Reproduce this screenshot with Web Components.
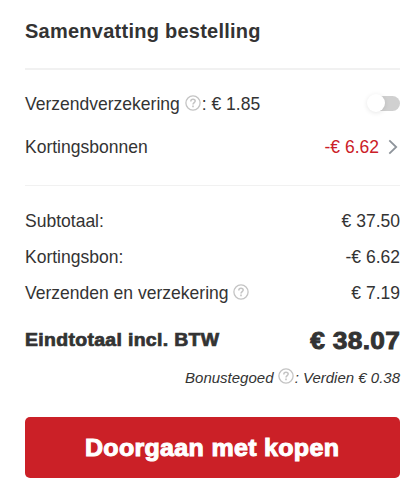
<!DOCTYPE html>
<html lang="nl">
<head>
<meta charset="utf-8">
<title>Samenvatting bestelling</title>
<style>
body {
    margin: 0;
    background: #fff;
    color: #333;
    font-family: "Liberation Sans", Arial, sans-serif;
    font-size: 17.52px;
}
</style>
</head>
<body>
<order-summary></order-summary>

<script>
// small round question mark behind a label
var template_help = document.createElement("template");
template_help.innerHTML = `
<style>
:host { display: inline-block; width: 16px; height: 16px; margin-right: 1px; vertical-align: -1px; }
svg { display: block; }
</style>
<svg width="16" height="16" viewBox="0 0 16 16" fill="none" stroke="#c4c4c4">
    <circle cx="8" cy="8" r="7.1" stroke-width="1.3"/>
    <path d="M5.8 6.4C5.8 4.9 6.7 4.2 8 4.2s2.2.8 2.2 1.9c0 1.5-2.2 1.7-2.2 3.4" stroke-width="1.5"/>
    <path d="M8 10.6v1.6" stroke-width="1.6"/>
</svg>
`;

class HelpIcon extends HTMLElement {
    constructor(){
        super();
        this.attachShadow({mode:"open"});
    }

    connectedCallback(){
        this.shadowRoot.appendChild(template_help.content.cloneNode(true));
    }
}

customElements.define("help-icon", HelpIcon)

// switch in its off position
var template_toggle = document.createElement("template");
template_toggle.innerHTML = `
<style>
:host {
    display: flex;
    align-items: center;
    width: 31px;
    height: 15px;
    margin-bottom: 2px;
    border-radius: 8px;
    background: #d0d0d0;
}
.knob {
    flex: none;
    width: 18px;
    height: 18px;
    margin-left: -2px;
    border-radius: 50%;
    background: #fff;
    box-shadow: 0 1px 5px rgba(0, 0, 0, .1);
}
</style>
<div class='knob'></div>
`;

class ToggleSwitch extends HTMLElement {
    constructor(){
        super();
        this.attachShadow({mode:"open"});
    }

    connectedCallback(){
        this.shadowRoot.appendChild(template_toggle.content.cloneNode(true));
        this.setAttribute("role", "switch");
        this.setAttribute("aria-checked", "false");
        this.addEventListener("click", () => {
            this.setAttribute("aria-checked", this.getAttribute("aria-checked") !== "true");
        });
    }
}

customElements.define("toggle-switch", ToggleSwitch)

// label on the left, value on the right
var template_row = document.createElement("template");
template_row.innerHTML = `
<style>
:host {
    display: flex;
    align-items: center;
    justify-content: space-between;
    height: 36px;
    white-space: nowrap;
}
.value { display: flex; align-items: center; }
</style>
<div><slot></slot></div>
<div class='value'><slot name='value'></slot></div>
`;

class SummaryRow extends HTMLElement {
    constructor(){
        super();
        this.attachShadow({mode:"open"});
    }

    connectedCallback(){
        this.shadowRoot.appendChild(template_row.content.cloneNode(true));
    }
}

customElements.define("summary-row", SummaryRow)

var template_button = document.createElement("template");
template_button.innerHTML = `
<style>
:host { display: block; }
button {
    display: block;
    width: 100%;
    height: 61px;
    padding: 1px 0 0;
    border: 0;
    border-radius: 5px;
    background: #cb2027;
    color: #fff;
    font: bold 23px "Liberation Sans", Arial, sans-serif;
    letter-spacing: .3px;
    -webkit-text-stroke: 1px #fff;
}
span { display: inline-block; transform: scaleX(1.086); }
</style>
<button type='button'><span><slot></slot></span></button>
`;

class CheckoutButton extends HTMLElement {
    constructor(){
        super();
        this.attachShadow({mode:"open"});
    }

    connectedCallback(){
        this.shadowRoot.appendChild(template_button.content.cloneNode(true));
    }
}

customElements.define("checkout-button", CheckoutButton)

var template_summary = document.createElement("template");
template_summary.innerHTML = `
<style>
:host { display: block; padding: 19px 16px 0 25px; }
h2 { margin: 0; font-size: 20px; line-height: 24px; letter-spacing: .25px; }
.options {
    margin-top: 25px;
    padding: 16px 0 13px;
    border-top: 2px solid #f1f1f1;
    border-bottom: 1px solid #f1f1f1;
}
.coupon { height: 50px; }
.discount { color: #cb2027; }
.chevron { margin: 0 2px 0 9px; }
.costs { padding-top: 17px; }
.total { height: 60px; margin-top: -1px; font-weight: bold; }
.total-label, .total-price { display: inline-block; }
.total-label { font-size: 18px; letter-spacing: .3px; transform: scaleX(1.08); transform-origin: left; -webkit-text-stroke: .7px #333; }
.total-price { font-size: 24px; letter-spacing: .3px; padding-top: 1px; transform: scaleX(1.095); transform-origin: right; -webkit-text-stroke: .9px #333; }
.bonus { margin-top: -2px; font-size: 15px; line-height: 18px; font-style: italic; text-align: right; }
checkout-button { margin-top: 30px; }
</style>
<h2>Samenvatting bestelling</h2>
<div class='options'>
    <summary-row>Verzendverzekering <help-icon></help-icon>: € 1.85
        <toggle-switch slot='value'></toggle-switch>
    </summary-row>
    <summary-row class='coupon'>Kortingsbonnen
        <span slot='value' class='discount'>-€ 6.62</span>
        <svg slot='value' class='chevron' width='10' height='16' viewBox='0 0 10 16' fill='none' stroke='#8e949b' stroke-width='1.8'><path d='M1.3 1.3 8.2 8l-6.9 6.7'/></svg>
    </summary-row>
</div>
<div class='costs'>
    <summary-row>Subtotaal:<span slot='value'>€ 37.50</span></summary-row>
    <summary-row>Kortingsbon:<span slot='value'>-€ 6.62</span></summary-row>
    <summary-row>Verzenden en verzekering <help-icon></help-icon><span slot='value'>€ 7.19</span></summary-row>
    <summary-row class='total'>
        <span class='total-label'>Eindtotaal incl. BTW</span>
        <span slot='value' class='total-price'>€ 38.07</span>
    </summary-row>
</div>
<div class='bonus'>Bonustegoed <help-icon></help-icon>: Verdien € 0.38</div>
<checkout-button>Doorgaan met kopen</checkout-button>
`;

class OrderSummary extends HTMLElement {
    constructor(){
        super();
        this.attachShadow({mode:"open"});
    }

    connectedCallback(){
        this.shadowRoot.appendChild(template_summary.content.cloneNode(true));
    }
}

customElements.define("order-summary", OrderSummary)
</script>
</body>
</html>
